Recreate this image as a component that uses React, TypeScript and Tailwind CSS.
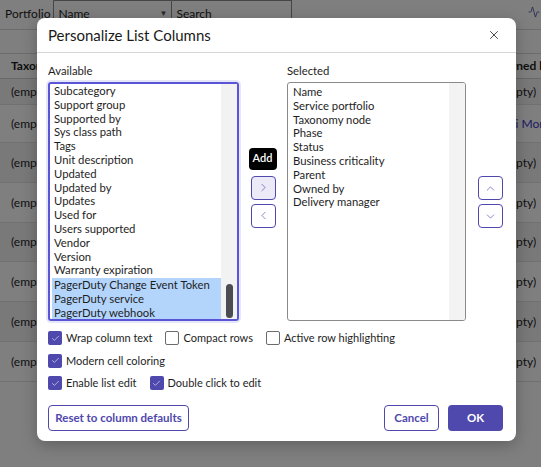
import { Activity, X, ChevronRight, ChevronLeft, ChevronUp, ChevronDown, Check } from "lucide-react";

const available = [
  "Subcategory",
  "Support group",
  "Supported by",
  "Sys class path",
  "Tags",
  "Unit description",
  "Updated",
  "Updated by",
  "Updates",
  "Used for",
  "Users supported",
  "Vendor",
  "Version",
  "Warranty expiration",
];

const picked = ["PagerDuty Change Event Token", "PagerDuty service", "PagerDuty webhook"];

const selected = [
  "Name",
  "Service portfolio",
  "Taxonomy node",
  "Phase",
  "Status",
  "Business criticality",
  "Parent",
  "Owned by",
  "Delivery manager",
];

const rows = [
  { h: "h-[26px]" },
  { h: "h-[38px]", link: true },
  { h: "h-[40px]" },
  { h: "h-[40px]" },
  { h: "h-[39px]" },
  { h: "h-[40px]" },
  { h: "h-[40px]" },
  { h: "h-[40px]" },
];

function Box({ checked, label }: { checked: boolean; label: string }) {
  return (
    <label className="flex items-center gap-[4px] leading-[14px]">
      {checked ? (
        <span className="flex h-[14px] w-[14px] items-center justify-center rounded-[2px] bg-[#4f48ad]">
          <Check size={9} strokeWidth={1.5} className="text-white" />
        </span>
      ) : (
        <span className="h-[14px] w-[14px] rounded-[2px] border border-[#6b6b6b] bg-white" />
      )}
      <span className="text-[11px]">{label}</span>
    </label>
  );
}

function ArrowButton({ children, active }: { children: React.ReactNode; active?: boolean }) {
  return (
    <button
      className={`flex h-[24px] w-[25px] items-center justify-center rounded-[4px] border border-[#4f48ad] text-[#4f48ad] ${
        active ? "bg-[#eceaf7]" : "bg-white"
      }`}
    >
      {children}
    </button>
  );
}

export default function App() {
  return (
    <div className="relative h-[467px] w-[541px] overflow-hidden bg-white font-['Lato',sans-serif] text-[11.3px] text-[#1e1e1e]">
      {/* list page underneath */}
      <div className="flex h-[30px] items-start border-b border-[#d8d8d8]">
        <span className="ml-[5px] mt-[5px] text-[12px]">Portfolio</span>
        <div className="ml-[3px] flex h-[25px] w-[119px] items-center justify-between rounded-b-[3px] border border-[#8a8a8a] px-[4px] text-[12px]">
          <span className="pt-[2px]">Name</span>
          <span className="text-[8px] text-[#555]">▼</span>
        </div>
        <div className="flex h-[25px] w-[120px] items-center rounded-br-[3px] border border-l-0 border-[#8a8a8a] px-[4px] text-[12px]">
          <span className="pt-[2px]">Search</span>
        </div>
        <Activity size={12} strokeWidth={1.5} className="ml-auto mr-[1px] mt-[6px] text-[#3b3a9e]" />
      </div>
      <div className="h-[24px] border-b border-[#d8d8d8]" />
      <div className="flex h-[25px] items-center justify-between border-b border-[#d0d0d0] pl-[11px] pr-[8px] text-[12px] font-bold">
        <span>Taxonomy node</span>
        <span className="-mr-[36px] w-[72px] whitespace-nowrap">Owned by</span>
      </div>
      {rows.map((r, i) => (
        <div
          key={i}
          className={`flex ${r.h} items-center justify-between border-b border-[#e2e2e2] pl-[11px] pr-[8px] text-[12px] ${
            i % 2 === 0 ? "bg-[#f3f3f3]" : "bg-white"
          }`}
        >
          <span>(empty)</span>
          <span className={`-mr-[36px] w-[72px] whitespace-nowrap ${r.link ? "text-[#3737c8]" : ""}`}>
            {r.link ? "Suzi Morgan" : "(empty)"}
          </span>
        </div>
      ))}

      <div className="absolute inset-0 bg-black/50" />

      {/* dialog */}
      <div className="absolute left-[37px] top-[18px] w-[479px] rounded-[8px] bg-white shadow-[0_4px_16px_rgba(0,0,0,0.25)]">
        <div className="flex h-[35px] items-center justify-between border-b border-[#d6d6d6] pl-[11px] pr-[15px]">
          <h2 className="text-[15px] text-[#1a1a1a]">Personalize List Columns</h2>
          <X size={14} strokeWidth={1.5} className="text-[#333]" />
        </div>

        <div className="pb-[10px] pl-[11px] pr-[13px] pt-[11px]">
          <div className="flex">
            <div className="flex w-[191px] flex-col">
              <span className="mb-[4px] leading-[14px]">Available</span>
              <div className="flex h-[239px] overflow-hidden rounded-[3px] border-2 border-[#5a54d6] shadow-[0_0_0_2px_rgba(90,84,214,0.15)]">
                <ul className="flex-1 pl-[2px] leading-[13.8px]">
                  {available.map((a) => (
                    <li key={a} className="whitespace-nowrap px-[2px]">
                      {a}
                    </li>
                  ))}
                  <li className="h-[1px]" />
                  {picked.map((a) => (
                    <li key={a} className="whitespace-nowrap bg-[#b4d5fb] px-[2px]">
                      {a}
                    </li>
                  ))}
                </ul>
                <div className="flex w-[16px] flex-col justify-end bg-[#f2f2f2] pb-[1px]">
                  <div className="mx-auto h-[34px] w-[7px] rounded-full bg-[#4b4b52]" />
                </div>
              </div>
            </div>

            <div className="flex w-[48px] flex-col items-center justify-center pt-[18px]">
              <div className="relative flex flex-col gap-[4px]">
                <span className="absolute -top-[28px] left-[-2px] flex h-[22px] w-[28px] items-center justify-center rounded-[4px] bg-black text-[11px] font-semibold text-white">
                  Add
                </span>
                <ArrowButton active>
                  <ChevronRight size={13} strokeWidth={1.2} />
                </ArrowButton>
                <ArrowButton>
                  <ChevronLeft size={13} strokeWidth={1.2} />
                </ArrowButton>
              </div>
            </div>

            <div className="flex w-[179px] flex-col">
              <span className="mb-[4px] leading-[14px]">Selected</span>
              <div className="flex h-[239px] overflow-hidden rounded-[3px] border border-[#8a8a8a]">
                <ul className="flex-1 px-[5px] pt-[2px] leading-[13.8px]">
                  {selected.map((s) => (
                    <li key={s} className="whitespace-nowrap">
                      {s}
                    </li>
                  ))}
                </ul>
                <div className="w-[16px] bg-[#f3f3f3]" />
              </div>
            </div>

            <div className="flex flex-1 flex-col items-end justify-center gap-[4px] pt-[19px]">
              <ArrowButton>
                <ChevronUp size={13} strokeWidth={1.2} />
              </ArrowButton>
              <ArrowButton>
                <ChevronDown size={13} strokeWidth={1.2} />
              </ArrowButton>
            </div>
          </div>

          <div className="mt-[10px] flex flex-col gap-[8.5px]">
            <div className="flex gap-[13px]">
              <Box checked label="Wrap column text" />
              <Box checked={false} label="Compact rows" />
              <Box checked={false} label="Active row highlighting" />
            </div>
            <Box checked label="Modern cell coloring" />
            <div className="flex gap-[13px]">
              <Box checked label="Enable list edit" />
              <Box checked label="Double click to edit" />
            </div>
          </div>

          <div className="mt-[15px] flex items-center">
            <button className="h-[26px] w-[141px] rounded-[4px] border border-[#4f48ad] text-[11.5px] font-bold text-[#4f48ad]">
              Reset to column defaults
            </button>
            <button className="ml-auto h-[26px] w-[55px] rounded-[4px] border border-[#4f48ad] text-[11.5px] font-bold text-[#4f48ad]">
              Cancel
            </button>
            <button className="ml-[9px] h-[26px] w-[55px] rounded-[4px] bg-[#4f48ad] text-[11.5px] font-bold text-white">
              OK
            </button>
          </div>
        </div>
      </div>
    </div>
  );
}
